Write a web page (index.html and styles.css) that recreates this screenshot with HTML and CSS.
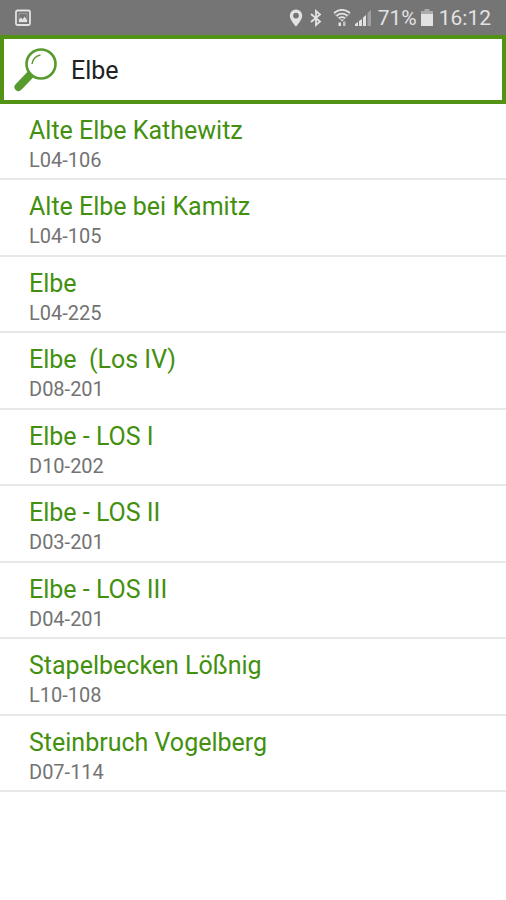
FILE: index.html
```html
<!DOCTYPE html>
<html lang="de">
<head>
<meta charset="utf-8">
<meta name="viewport" content="width=device-width, initial-scale=1">
<title>Gewässersuche</title>
<link rel="stylesheet" href="styles.css">
</head>
<body>
<header class="status">
  <svg class="shot" width="16" height="18" viewBox="0 0 16 18" aria-hidden="true"><rect x="1" y="1.500" width="14" height="14.500" rx="1.500" fill="none" stroke="currentColor" stroke-width="1.800"/><rect x="4" y="4.500" width="8" height="8.500" fill="none" stroke="currentColor" stroke-width=".7" opacity=".5"/><path d="M4 13V10.500l2-2 1.500 2L9.500 7.500l2.500 3.500v2z" fill="currentColor"/></svg>
  <div class="indicators">
    <svg width="14" height="18" viewBox="0 0 14 18" aria-hidden="true"><path fill="currentColor" fill-rule="evenodd" d="M7 .5a6.200 6.200 0 0 0-6.200 6.200C.8 11 7 17.500 7 17.500S13.200 11 13.200 6.700A6.200 6.200 0 0 0 7 .5zm0 3.200a2.900 2.900 0 1 1 0 5.800 2.900 2.900 0 0 1 0-5.800z"/></svg>
    <svg width="14" height="18" viewBox="0 0 14 18" aria-hidden="true"><path fill="none" stroke="currentColor" stroke-width="1.800" d="M2 5l9 7.500L7 16V2l4 3.500L2 13"/></svg>
    <svg class="wifi" width="18" height="18" viewBox="0 0 18 18" aria-hidden="true"><g fill="none" stroke="currentColor" stroke-width="1.800"><path d="M1 4Q9-2.300 17 4M3.500 6.700Q9 2.500 14.500 6.700M6 9.300Q9 7.100 12 9.300"/></g><path d="M1 4.500L9 12l8-7.500" fill="none" stroke="currentColor" stroke-width=".8" opacity=".6"/><path fill="currentColor" d="M7.500 10.500h3L9 12.500zM5.500 13.500h2.500V17H5.500z"/><path fill="currentColor" opacity=".7" d="M10 12.500h2.500V17H10z"/></svg>
    <svg class="signal" width="18" height="18" viewBox="0 0 18 18" aria-hidden="true"><g fill="currentColor"><path d="M1 15l3-2v4H1zM5 12l3-2v7H5zM9 8.500l3-2.500v11H9z"/><path opacity=".4" d="M13.500 4L17 1v16h-3.500z"/></g></svg>
    <span class="percent">71%</span>
    <svg class="battery" width="12" height="18" viewBox="0 0 12 18" aria-hidden="true"><path fill="currentColor" opacity=".5" d="M3.500 0h5v2H12v3.500H0V2h3.500z"/><path fill="currentColor" d="M0 5h12v12H0z"/></svg>
    <time class="clock">16:12</time>
  </div>
</header>
<main>
  <form class="search">
    <label for="query"><svg width="44" height="44" viewBox="0 0 44 44" role="img" aria-label="Suche"><path d="M5.500 39L17 27" stroke="#579a2e" stroke-width="8" stroke-linecap="round" fill="none"/><path d="M15 24l5 5" stroke="#579a2e" stroke-width="3"/><circle cx="28" cy="16" r="14.500" fill="#fff" stroke="#579a2e" stroke-width="2.600"/><path d="M19 16q1-7.500 8.500-9" fill="none" stroke="#579a2e" stroke-width="1.500"/></svg></label>
    <input id="query" type="text" value="Elbe">
  </form>
  <ul class="results">
    <li><a href="#L04-106"><span class="name">Alte Elbe Kathewitz</span><span class="code">L04-106</span></a></li>
    <li><a href="#L04-105"><span class="name">Alte Elbe bei Kamitz</span><span class="code">L04-105</span></a></li>
    <li><a href="#L04-225"><span class="name">Elbe</span><span class="code">L04-225</span></a></li>
    <li><a href="#D08-201"><span class="name">Elbe  (Los IV)</span><span class="code">D08-201</span></a></li>
    <li><a href="#D10-202"><span class="name">Elbe - LOS I</span><span class="code">D10-202</span></a></li>
    <li><a href="#D03-201"><span class="name">Elbe - LOS II</span><span class="code">D03-201</span></a></li>
    <li><a href="#D04-201"><span class="name">Elbe - LOS III</span><span class="code">D04-201</span></a></li>
    <li><a href="#L10-108"><span class="name">Stapelbecken Lößnig</span><span class="code">L10-108</span></a></li>
    <li><a href="#D07-114"><span class="name">Steinbruch Vogelberg</span><span class="code">D07-114</span></a></li>
  </ul>
</main>
</body>
</html>
```
FILE: styles.css
```css
* { box-sizing: border-box; }

body {
  margin: 0;
  background: #fff;
  font-family: Roboto, "Liberation Sans", sans-serif;
}

.status {
  display: flex;
  align-items: center;
  justify-content: space-between;
  height: 35px;
  padding: 0 15px;
  background: #757575;
  color: #e2e2e2;
  font-size: 21px;
  line-height: 24px;
}

.indicators {
  display: flex;
  align-items: center;
}

.indicators svg { margin-right: 6px; }
.indicators .wifi { margin: 0 3px 0 4px; }
.indicators .battery { margin: 0 6px 0 4px; }

.search {
  display: flex;
  align-items: center;
  height: 69px;
  padding: 0 9px;
  border: 4px solid #529316;
}

.search label { display: flex; }

.search input {
  flex: 1;
  min-width: 0;
  margin-left: 14px;
  padding: 2px 0 0;
  border: 0;
  outline: 0;
  background: none;
  color: #222;
  font: 25px/32px Roboto, "Liberation Sans", sans-serif;
}

.results {
  display: grid;
  grid-auto-rows: 1fr;
  min-height: 688px;
  margin: 0;
  padding: 0;
  list-style: none;
}

.results li { border-bottom: 2px solid #e8e8e8; }

.results a {
  display: flex;
  flex-direction: column;
  padding: 11px 29px 4px;
  text-decoration: none;
}

.name {
  color: #43900f;
  font-size: 25px;
  line-height: 32px;
  white-space: pre-wrap;
}

.code {
  color: #737373;
  font-size: 20px;
  line-height: 27px;
}
```
